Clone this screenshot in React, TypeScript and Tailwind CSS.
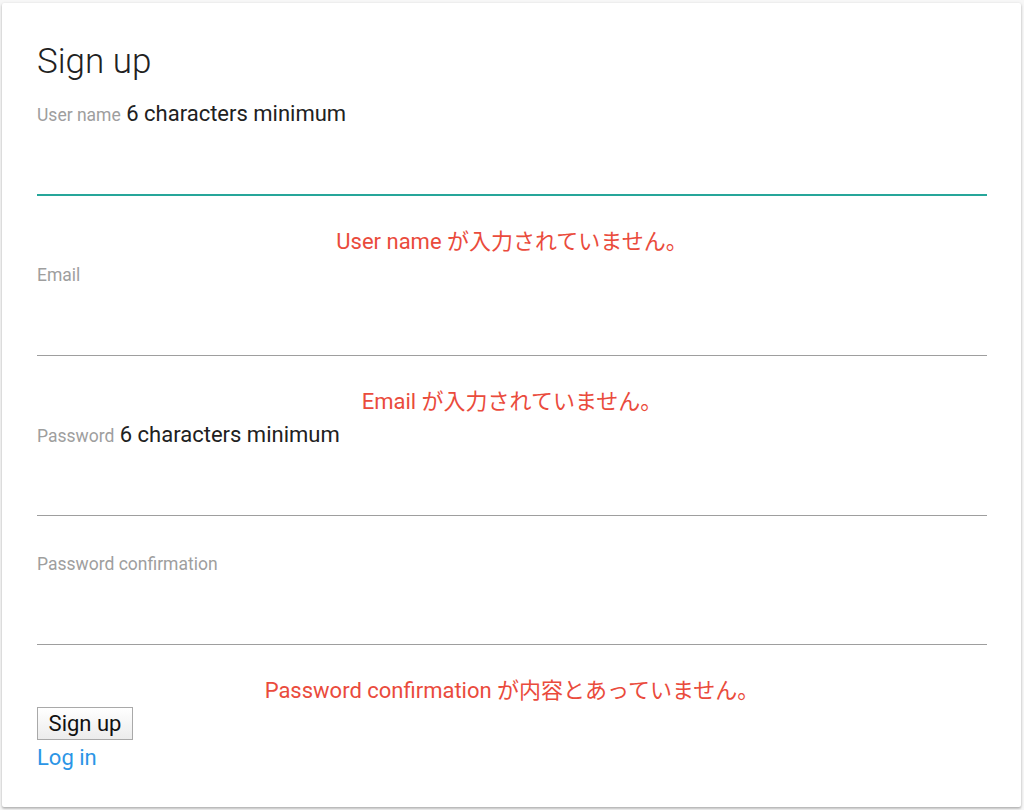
import React from 'react';

type FieldProps = {
  label: string;
  hint?: string;
  error?: string;
  focused?: boolean;
  first?: boolean;
};

function Field({ label, hint, error, focused, first }: FieldProps) {
  return (
    <div className={first ? '' : 'pt-[6px]'}>
      <div
        className={
          focused
            ? 'h-[94px] border-b-2 border-[#26a69a]'
            : 'h-[93px] border-b border-[#9e9e9e]'
        }
      >
        <div className="h-[24px] leading-[24px] whitespace-nowrap">
          <span className="text-[17.5px] text-[#9e9e9e]">{label}</span>
          {hint && <span className="text-[22px] text-[#212121]"> {hint}</span>}
        </div>
      </div>
      {error ? (
        <p className="pt-[31px] text-center text-[22px] leading-[30px] text-[#ea4b3c]">{error}</p>
      ) : (
        <div className="h-[30px]" />
      )}
    </div>
  );
}

export default function App() {
  return (
    <div
      className="w-[1024px] h-[810px] bg-[#f7f7f7] pt-[3px] pl-[2px]"
      style={{ fontFamily: 'Roboto, "Noto Sans CJK JP", sans-serif' }}
    >
      <div className="w-[1019px] h-[804px] rounded-[2px] bg-white pt-[37px] pl-[35px] pr-[34px] shadow-[0_1px_3px_rgba(0,0,0,0.25),0_2px_2px_rgba(0,0,0,0.1)]">
        <h1 className="text-[35px] font-light leading-[44px] text-[#212121]">Sign up</h1>
        <div className="pt-[18px]">
          <Field
            first
            focused
            label="User name"
            hint="6 characters minimum"
            error="User name が入力されていません。"
          />
          <Field label="Email" error="Email が入力されていません。" />
          <Field label="Password" hint="6 characters minimum" />
          <Field
            label="Password confirmation"
            error="Password confirmation が内容とあっていません。"
          />
        </div>
        <button className="mt-[1px] w-[96px] h-[33px] border border-[#a9a9a9] bg-gradient-to-b from-white to-[#ececec] text-[22px] leading-[30px] text-[#111]">
          Sign up
        </button>
        <div className="pt-[3px]">
          <a href="#" className="text-[22px] leading-[30px] text-[#2b95e6]">
            Log in
          </a>
        </div>
      </div>
    </div>
  );
}
